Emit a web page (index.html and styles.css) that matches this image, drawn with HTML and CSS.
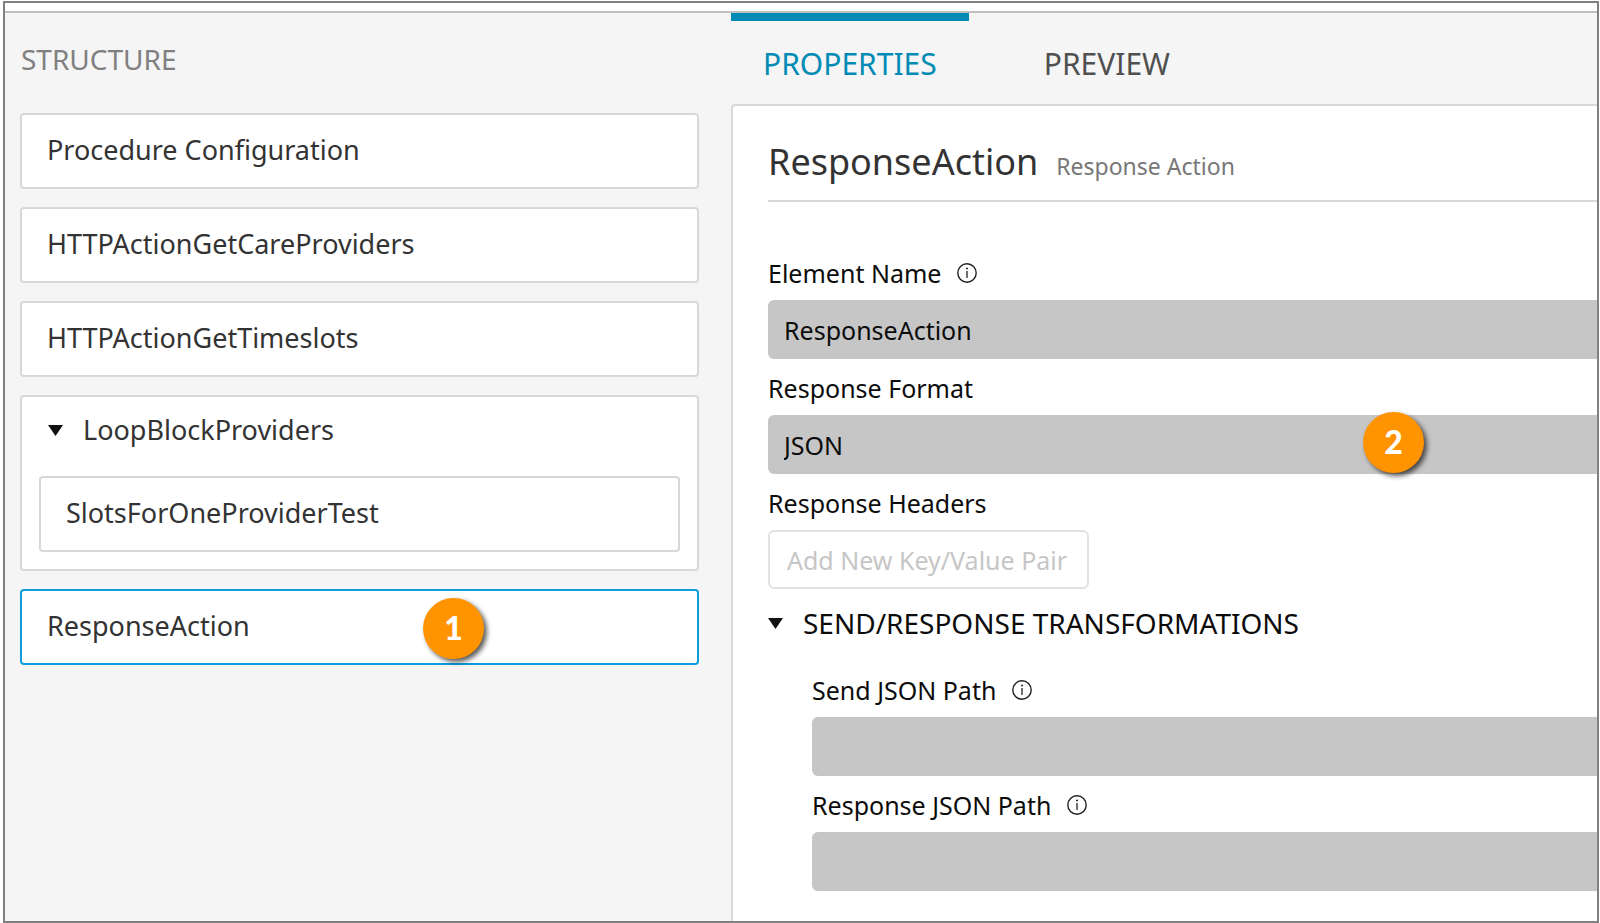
FILE: index.html
```html
<!DOCTYPE html>
<html lang="en">
<head>
<meta charset="utf-8">
<title>Procedure Designer</title>
<link rel="stylesheet" href="styles.css">
</head>
<body>
<svg class="defs" aria-hidden="true">
  <symbol id="info" viewBox="0 0 20 20">
    <circle cx="10" cy="10" r="9.2" fill="none" stroke="currentColor" stroke-width="1.4"/>
    <circle cx="10" cy="5.6" r="1" fill="currentColor"/>
    <path d="M10 8v7" stroke="currentColor" stroke-width="1.3"/>
  </symbol>
  <symbol id="caret" viewBox="0 0 15 11"><path d="M0 0h15L7.500 11z" fill="currentColor"/></symbol>
</svg>
<div class="frame">
  <div class="topbar"></div>
  <div class="workspace">
    <aside class="structure">
      <h2 class="structure-title">STRUCTURE</h2>
      <div class="tree">
        <button class="node" type="button">Procedure Configuration</button>
        <button class="node" type="button">HTTPActionGetCareProviders</button>
        <button class="node" type="button">HTTPActionGetTimeslots</button>
        <div class="group">
          <button class="group-head" type="button" aria-expanded="true"><svg class="caret"><use href="#caret"/></svg>LoopBlockProviders</button>
          <button class="node" type="button">SlotsForOneProviderTest</button>
        </div>
        <button class="node selected" type="button">ResponseAction<span class="badge badge-one">1</span></button>
      </div>
    </aside>
    <main class="detail">
      <div class="tabs" role="tablist">
        <button class="tab active" type="button" role="tab" aria-selected="true">PROPERTIES</button>
        <button class="tab" type="button" role="tab" aria-selected="false">PREVIEW</button>
      </div>
      <section class="panel">
        <header class="panel-head">
          <h1 class="panel-title">ResponseAction</h1>
          <span class="panel-type">Response Action</span>
        </header>
        <div class="fields">
          <div class="field">
            <label class="label" for="name">Element Name <svg class="info"><use href="#info"/></svg></label>
            <input class="control" id="name" type="text" value="ResponseAction">
          </div>
          <div class="field">
            <label class="label" for="format">Response Format</label>
            <select class="control" id="format"><option>JSON</option></select>
            <span class="badge badge-two">2</span>
          </div>
          <div class="field">
            <span class="label">Response Headers</span>
            <button class="add" type="button" disabled>Add New Key/Value Pair</button>
          </div>
        </div>
        <button class="section-head" type="button" aria-expanded="true"><svg class="caret"><use href="#caret"/></svg>SEND/RESPONSE TRANSFORMATIONS</button>
        <div class="fields nested">
          <div class="field">
            <label class="label" for="send">Send JSON Path <svg class="info"><use href="#info"/></svg></label>
            <input class="control" id="send" type="text">
          </div>
          <div class="field">
            <label class="label" for="response">Response JSON Path <svg class="info"><use href="#info"/></svg></label>
            <input class="control" id="response" type="text">
          </div>
        </div>
      </section>
    </main>
  </div>
</div>
</body>
</html>
```
FILE: styles.css
```css
* { box-sizing: border-box; }

body {
  margin: 0;
  padding: 1px 1px 1px 3px;
  background: #fff;
  color: #0c0c0c;
  font-family: "Noto Sans", "Open Sans", sans-serif;
  font-size: 25px;
}

button, input, select { font: inherit; color: inherit; }

button {
  margin: 0;
  padding: 0;
  border: 0;
  background: none;
  text-align: left;
}

.defs { position: absolute; width: 0; height: 0; }

.frame {
  display: flex;
  flex-direction: column;
  min-height: calc(100vh - 2px);
  border: 2px solid #808080;
}

.topbar { height: 10px; border-bottom: 2px solid #c0c0c0; }

.workspace {
  flex: 1;
  display: grid;
  grid-template-columns: 726fr 866fr;
  background: #f5f5f5;
}

/* Structure tree */
.structure { padding: 26px 32px 26px 15px; }

.structure-title {
  margin: 0 0 34px;
  padding-left: 1px;
  color: #808080;
  font-size: 28px;
  font-weight: 400;
  line-height: 40px;
}

.tree {
  display: flex;
  flex-direction: column;
  gap: 18px;
  color: #333;
  font-size: 27px;
  line-height: 36px;
}

.node {
  position: relative;
  width: 100%;
  padding: 17px 25px 19px;
  border: 2px solid #d8d8d8;
  border-radius: 4px;
  background: #fff;
}

.selected { border-color: #0d9dda; }

.group {
  padding: 0 17px 17px;
  border: 2px solid #d8d8d8;
  border-radius: 4px;
  background: #fff;
}

.group-head {
  display: flex;
  align-items: center;
  gap: 20px;
  padding: 15px 8px 28px 9px;
}

.caret { flex: none; width: 15px; height: 11px; color: #111; }

.badge {
  position: absolute;
  width: 61px;
  height: 61px;
  border-radius: 50%;
  background: #ff9300;
  box-shadow: 3px 3px 5px rgba(0, 0, 0, .65);
  color: #fff;
  font-family: Lato, sans-serif;
  font-size: 32px;
  font-weight: 900;
  line-height: 60px;
  text-align: center;
}

.badge-one { top: 7px; left: 401px; }
.badge-two { right: 173px; bottom: 1px; }

/* Detail pane */
.detail { display: flex; flex-direction: column; min-width: 0; }

.tabs { display: flex; gap: 43px; }

.tab {
  padding: 23px 32px 20px;
  border-top: 8px solid transparent;
  color: #505050;
  font-size: 30px;
  line-height: 40px;
}

.tab.active { border-top-color: #008bb5; color: #008bb5; }

.panel {
  flex: 1;
  padding: 32px 0 30px 35px;
  border: 2px solid #d8d8d8;
  border-width: 2px 0 0 2px;
  border-radius: 4px 0 0;
  background: #fff;
}

.panel-head {
  display: flex;
  align-items: baseline;
  gap: 18px;
  margin-bottom: 53px;
  padding-bottom: 14px;
  border-bottom: 2px solid #d8d8d8;
}

.panel-title {
  margin: 0;
  color: #333;
  font-size: 36px;
  font-weight: 400;
  line-height: 48px;
}

.panel-type { color: #777; font-size: 23px; line-height: 36px; }

.fields { display: flex; flex-direction: column; gap: 11px; }

.nested { padding-left: 44px; }

.field { position: relative; }

.label {
  display: flex;
  align-items: center;
  gap: 16px;
  margin-bottom: 9px;
  line-height: 36px;
}

.info { width: 20px; height: 20px; color: #222; }

.control {
  display: block;
  width: 100%;
  height: 59px;
  padding: 0 16px;
  border: 0;
  border-radius: 6px 0 0 6px;
  background: #c6c6c6;
  appearance: none;
}

.add {
  display: block;
  padding: 10px 20px 9px 17px;
  border: 2px solid #e2e2e2;
  border-radius: 6px;
  color: #c6c6c6;
  line-height: 36px;
}

.section-head {
  display: flex;
  align-items: center;
  gap: 20px;
  margin: 16px 0 31px;
  font-size: 28px;
  line-height: 36px;
}
```
